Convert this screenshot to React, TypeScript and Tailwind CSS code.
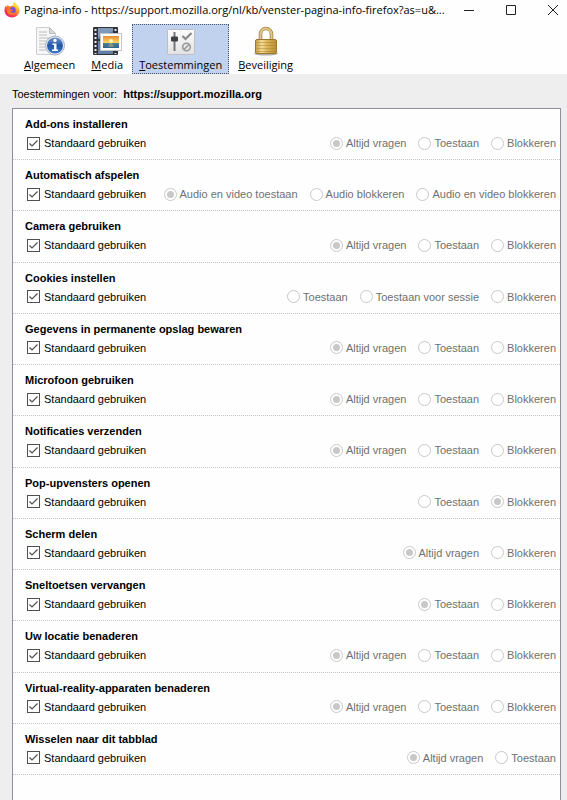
import { useState } from "react";

const title = "Pagina-info - https://support.mozilla.org/nl/kb/venster-pagina-info-firefox?as=u&...";

type Permission = { id: string; name: string; options: string[]; selected: number };

const ask = ["Altijd vragen", "Toestaan", "Blokkeren"];

const permissions: Permission[] = [
  { id: "install", name: "Add-ons installeren", options: ask, selected: 0 },
  {
    id: "autoplay",
    name: "Automatisch afspelen",
    options: ["Audio en video toestaan", "Audio blokkeren", "Audio en video blokkeren"],
    selected: 0,
  },
  { id: "camera", name: "Camera gebruiken", options: ask, selected: 0 },
  { id: "cookie", name: "Cookies instellen", options: ["Toestaan", "Toestaan voor sessie", "Blokkeren"], selected: -1 },
  { id: "storage", name: "Gegevens in permanente opslag bewaren", options: ask, selected: 0 },
  { id: "microphone", name: "Microfoon gebruiken", options: ask, selected: 0 },
  { id: "notification", name: "Notificaties verzenden", options: ask, selected: 0 },
  { id: "popup", name: "Pop-upvensters openen", options: ["Toestaan", "Blokkeren"], selected: 1 },
  { id: "screen", name: "Scherm delen", options: ["Altijd vragen", "Blokkeren"], selected: 0 },
  { id: "shortcuts", name: "Sneltoetsen vervangen", options: ["Toestaan", "Blokkeren"], selected: 0 },
  { id: "geo", name: "Uw locatie benaderen", options: ask, selected: 0 },
  { id: "xr", name: "Virtual-reality-apparaten benaderen", options: ask, selected: 0 },
  { id: "tab", name: "Wisselen naar dit tabblad", options: ["Altijd vragen", "Toestaan"], selected: 0 },
];

function FirefoxLogo() {
  return (
    <svg className="size-4 shrink-0" viewBox="0 0 32 32" aria-hidden="true">
      <defs>
        <linearGradient id="fx" x1="0.85" y1="0.1" x2="0.2" y2="0.95">
          <stop offset="0" stopColor="#ffe23d" />
          <stop offset="0.4" stopColor="#ff9226" />
          <stop offset="0.75" stopColor="#f8394f" />
          <stop offset="1" stopColor="#e3208d" />
        </linearGradient>
      </defs>
      <path d="M3 7c1 1 2 2 2 3l3-5c0 2 1 3 3 4 3-2 6-2 8-2-1-3 0-5 2-7 1 4 5 5 7 9 2 2 3 5 3 8 0 8-7 14-15 14S1 25 1 17c0-4 1-7 2-10Z" fill="url(#fx)" />
      <circle cx="16" cy="17" r="7.500" fill="#7450dc" />
      <path d="M8 11c3-2 6-1 8 1-3 0-4 1-4 3 2 1 4 0 6 0 0 3-4 3-5 4 3 4 8 3 11 0-1 5-5 7-10 7-7 0-10-8-6-15Z" fill="#ff7a26" />
      <path d="M19 7c4 1 8 5 8 10 2-5 0-8-2-10 4 2 6 6 6 10 0-6-3-9-5-11-2-2-4-3-5-6-2 2-3 4-2 7Z" fill="#ffdc3a" />
    </svg>
  );
}

function PageInfoIcon() {
  return (
    <svg className="size-8" viewBox="0 0 32 32" aria-hidden="true">
      <defs>
        <linearGradient id="blue" x1="0" y1="0" x2="0" y2="1">
          <stop offset="0" stopColor="#6e95cf" />
          <stop offset="0.5" stopColor="#2456a8" />
          <stop offset="1" stopColor="#3c78cc" />
        </linearGradient>
      </defs>
      <path d="M2.500 2.500h13l6 6v21h-19Z" fill="#f7f7f7" stroke="#cfcfcf" />
      <path d="M15.500 2.500v6h6Z" fill="#d8d8d8" stroke="#bbb" />
      <path d="M5 7h8M5 10h8M5 13h14M5 16h7M5 19h6M5 22h6M5 25h7" stroke="#bdbdbd" strokeWidth="1.200" />
      <circle cx="21" cy="20.500" r="9.500" fill="#e5e9f0" stroke="#a8b0bf" />
      <circle cx="21" cy="20.500" r="8" fill="url(#blue)" />
      <circle cx="21" cy="15.500" r="1.700" fill="#fff" />
      <path d="M18.500 18.500h4v6h1.500v1.500h-6v-1.500H20V20h-1.500Z" fill="#fff" />
    </svg>
  );
}

function MediaIcon() {
  return (
    <svg className="size-8" viewBox="0 0 32 32" aria-hidden="true">
      <defs>
        <linearGradient id="sky" x1="0" y1="0" x2="0" y2="1">
          <stop offset="0" stopColor="#e88a3a" />
          <stop offset="0.55" stopColor="#fbd65c" />
          <stop offset="0.6" stopColor="#4f7f95" />
          <stop offset="1" stopColor="#2b6692" />
        </linearGradient>
      </defs>
      <rect x="2" y="2" width="25" height="28" rx="1" fill="#303338" />
      <path d="M7 3h15v11H7ZM7 16h15v13H7Z" fill="#617fa8" />
      <path d="M7 3h15v3L7 12Z" fill="#8099bb" />
      <path d="M4.500 4v25M24.500 4v25" stroke="#e8e8e8" strokeWidth="2" strokeDasharray="2 2" />
      <rect x="9.500" y="8.500" width="21" height="17" fill="#fff" stroke="#c5c5c5" />
      <rect x="12" y="11" width="16" height="12" fill="url(#sky)" />
      <circle cx="20" cy="16" r="2" fill="#fff4a8" />
      <path d="M18.500 19h3M17.500 21h5" stroke="#f5c35b" strokeOpacity="0.8" />
    </svg>
  );
}

function PermissionsIcon() {
  return (
    <svg className="size-8" viewBox="0 0 32 32" aria-hidden="true">
      <defs>
        <linearGradient id="panel" x1="0" y1="0" x2="0" y2="1">
          <stop offset="0" stopColor="#fdfdfd" />
          <stop offset="1" stopColor="#e2e2e2" />
        </linearGradient>
      </defs>
      <rect x="2.500" y="4.500" width="27" height="25" rx="1" fill="url(#panel)" stroke="#b9bec8" />
      <path d="M9.500 7v19" stroke="#777" strokeWidth="2" />
      <rect x="6" y="11.500" width="7" height="5" rx="1" fill="#3f4245" />
      <path d="m17.500 11 3 3 6-6" fill="none" stroke="#888" strokeWidth="2.200" />
      <circle cx="21.500" cy="22" r="3.800" fill="none" stroke="#999" strokeWidth="1.600" />
      <path d="m19 24.500 5-5" stroke="#999" strokeWidth="1.600" />
    </svg>
  );
}

function LockIcon() {
  return (
    <svg className="size-8" viewBox="0 0 32 32" aria-hidden="true">
      <defs>
        <linearGradient id="gold" x1="0" y1="0" x2="1" y2="0">
          <stop offset="0" stopColor="#c39a42" />
          <stop offset="0.3" stopColor="#f3dc96" />
          <stop offset="0.55" stopColor="#dcb65c" />
          <stop offset="1" stopColor="#b98d35" />
        </linearGradient>
      </defs>
      <ellipse cx="16" cy="28.500" rx="12" ry="2" fill="#b0b0b0" />
      <path d="M10.500 16V9.500a5.500 6 0 0 1 11 0V16" fill="none" stroke="#a5843c" strokeWidth="3.600" />
      <path d="M10.500 16V9.500a5.500 6 0 0 1 11 0V16" fill="none" stroke="#dec98c" strokeWidth="2" />
      <rect x="5.500" y="14.500" width="21" height="14" rx="1.500" fill="url(#gold)" stroke="#9c782c" />
      <path d="M7 17.500h18M7 20.500h18M7 23.500h18M7 26.500h18" stroke="#a17a2b" strokeOpacity="0.45" />
    </svg>
  );
}

const tabs = [
  { label: "Algemeen", Icon: PageInfoIcon },
  { label: "Media", Icon: MediaIcon },
  { label: "Toestemmingen", Icon: PermissionsIcon },
  { label: "Beveiliging", Icon: LockIcon },
];

function PermissionRow({ permission }: { permission: Permission }) {
  const [useDefault, setUseDefault] = useState(true);
  return (
    <li className="flex flex-col gap-[3px] border-b border-dotted border-[#c4c4c4] pt-[7px] pr-1 pl-3">
      <h2 id={permission.id} className="font-bold leading-4">
        {permission.name}
      </h2>
      <div className="flex items-center justify-between">
        <label className="flex items-center gap-1 leading-4 whitespace-nowrap">
          <span className="relative ml-0.5 size-[13px] shrink-0">
            <input
              type="checkbox"
              checked={useDefault}
              onChange={(e) => setUseDefault(e.target.checked)}
              className="peer block size-full appearance-none border border-[#505050] bg-white"
            />
            <svg className="pointer-events-none absolute inset-0 hidden size-full peer-checked:block" viewBox="0 0 13 13" aria-hidden="true">
              <path d="m2.500 6.500 2.500 2.500 5.500-5.500" fill="none" stroke="#505050" strokeWidth="1.200" />
            </svg>
          </span>
          Standaard gebruiken
        </label>
        <div role="radiogroup" aria-labelledby={permission.id} className="flex gap-3 text-[#707070]">
          {permission.options.map((option, i) => (
            <label key={option} className="flex items-center gap-[3px] leading-4 whitespace-nowrap">
              <input
                type="radio"
                name={permission.id}
                defaultChecked={i === permission.selected}
                disabled={useDefault}
                className="grid size-[13px] shrink-0 appearance-none place-items-center rounded-full border border-[#c8c8c8] bg-white before:size-[7px] before:rounded-full checked:before:bg-[#c8c8c8]"
              />
              {option}
            </label>
          ))}
        </div>
      </div>
    </li>
  );
}

export default function App() {
  const [active, setActive] = useState("Toestemmingen");
  return (
    <div className="flex min-h-screen flex-col bg-[#eeeeee] text-[11px] text-black">
      <header className="bg-[#fefefe] font-['Open_Sans','Noto_Sans',sans-serif]">
        <div className="flex h-5 items-center pl-1">
          <FirefoxLogo />
          <h1 className="ml-1 min-w-0 flex-1 truncate leading-5">{title}</h1>
          <div className="flex shrink-0 text-[#222]">
            <button aria-label="Minimaliseren" className="flex h-5 w-7 items-center justify-end pr-2">
              <svg className="size-3" viewBox="0 0 12 12"><path d="M1 6.500h10" stroke="currentColor" /></svg>
            </button>
            <button aria-label="Maximaliseren" className="flex h-5 w-[42px] items-center justify-end pr-2">
              <svg className="size-3" viewBox="0 0 12 12"><path d="M1.500 1.500h9v9h-9Z" fill="none" stroke="currentColor" /></svg>
            </button>
            <button aria-label="Sluiten" className="flex h-5 w-[42px] items-center justify-end pr-2">
              <svg className="size-3" viewBox="0 0 12 12"><path d="m1 1 10 10M11 1 1 11" stroke="currentColor" /></svg>
            </button>
          </div>
        </div>
        <nav className="flex gap-0.5 pt-1 pl-[17px]">
          {tabs.map(({ label, Icon }) => (
            <button
              key={label}
              onClick={() => setActive(label)}
              className={
                active === label
                  ? "flex h-[50px] flex-col items-center border border-dotted border-[#44546e] bg-[#c1d2ee] px-1.5"
                  : "flex h-[50px] flex-col items-center border border-transparent px-1.5"
              }
            >
              <Icon />
              <span className="leading-4">
                <span className="underline">{label[0]}</span>
                {label.slice(1)}
              </span>
            </button>
          ))}
        </nav>
      </header>
      <main className="flex flex-1 flex-col pr-1.5 pl-3 font-['Liberation_Sans',Arial,sans-serif]">
        <p className="flex gap-1.5 pt-3 pb-1.5 leading-4">
          Toestemmingen voor: <strong>https://support.mozilla.org</strong>
        </p>
        <div className="flex-1 border border-b-0 border-[#8f8f9d] bg-[#fefefe]">
          <ul className="grid min-h-[666px] auto-rows-fr">
            {permissions.map((p) => (
              <PermissionRow key={p.id} permission={p} />
            ))}
          </ul>
        </div>
      </main>
    </div>
  );
}
